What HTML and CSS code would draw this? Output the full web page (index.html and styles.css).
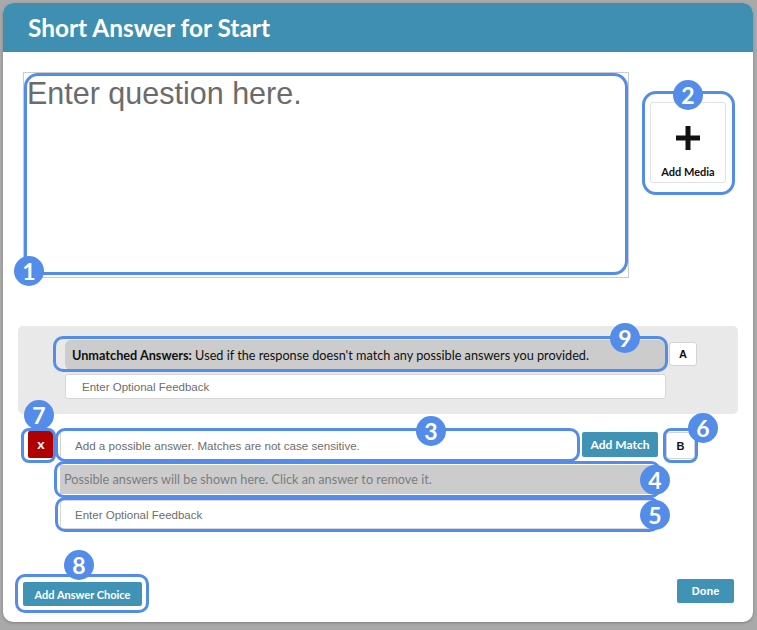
FILE: index.html
```html
<!DOCTYPE html>
<html>
<head>
<meta charset="utf-8">
<link rel="stylesheet" href="styles.css">
</head>
<body>
<div class="modal">
  <div class="header">Short Answer for Start</div>
  <div class="top-row">
    <div class="question">
      <div class="question-text">Enter question here.</div>
      <span class="ann ann-q"></span>
      <span class="badge b1">1</span>
    </div>
    <div class="media-ann">
      <div class="media-box">
        <svg class="plus" width="26" height="26" viewBox="0 0 26 26"><rect x="10.5" y="1" width="5" height="24" fill="#111"/><rect x="1" y="10.5" width="24" height="5" fill="#111"/></svg>
        <span class="media-label">Add Media</span>
      </div>
      <span class="badge b2">2</span>
    </div>
  </div>

  <div class="panel">
    <div class="panel-row">
      <div class="unmatched">
        <b>Unmatched Answers:</b> Used if the response doesn't match any possible answers you provided.
        <span class="ann ann-un"></span>
        <span class="badge b9">9</span>
      </div>
      <div class="letter letter-a">A</div>
    </div>
    <div class="feedback feedback-un">Enter Optional Feedback</div>
  </div>

  <div class="answer-row">
    <div class="xbtn">x
      <span class="ann ann-x"></span>
      <span class="badge b7">7</span>
    </div>
    <div class="answer-input">Add a possible answer. Matches are not case sensitive.
      <span class="ann ann-in"></span>
      <span class="badge b3">3</span>
    </div>
    <div class="btn add-match">Add Match</div>
    <div class="letter letter-b">B
      <span class="ann ann-b"></span>
      <span class="badge b6">6</span>
    </div>
  </div>
  <div class="possible">Possible answers will be shown here. Click an answer to remove it.
    <span class="ann ann-row"></span>
    <span class="badge b4">4</span>
  </div>
  <div class="feedback feedback-ans">Enter Optional Feedback
    <span class="ann ann-row"></span>
    <span class="badge b5">5</span>
  </div>

  <div class="footer">
    <div class="btn add-choice">Add Answer Choice
      <span class="ann ann-choice"></span>
      <span class="badge b8">8</span>
    </div>
    <div class="btn done">Done</div>
  </div>
</div>
</body>
</html>
```

FILE: styles.css
```css
* { box-sizing: border-box; }
html, body { margin: 0; padding: 0; }
body {
  background: #a9a9a9;
  width: 757px;
  height: 630px;
  overflow: hidden;
  padding: 3px 0 0 3px;
  font-family: Lato, "Liberation Sans", sans-serif;
}
.modal {
  width: 750px;
  height: 619px;
  background: #fff;
  border-radius: 10px;
  overflow: hidden;
  display: flex;
  flex-direction: column;
  box-shadow: 0 1px 3px rgba(0,0,0,0.25);
}
.header {
  height: 49px;
  flex: none;
  background: #3e8fb2;
  color: #fff;
  font-weight: 700;
  font-size: 24.4px;
  line-height: 49px;
  padding-left: 25px;
}
.top-row {
  display: flex;
  align-items: flex-start;
  padding-left: 20px;
  margin-top: 20px;
  height: 206px;
  flex: none;
}
.question {
  position: relative;
  width: 606px;
  height: 206px;
  border: 1px solid #cccccc;
}
.question-text {
  font-family: "Liberation Sans", Arial, sans-serif;
  font-size: 30.5px;
  color: #6b6b6b;
  padding: 3px 0 0 3px;
  line-height: 35px;
}
.media-ann {
  position: relative;
  margin-left: 13px;
  margin-top: 19px;
  width: 93px;
  height: 104px;
  border: 3px solid #548cea;
  border-radius: 14px;
  padding: 8px 0 0 5px;
}
.media-box {
  width: 76px;
  height: 81px;
  border: 1px solid #e2e2e2;
  border-radius: 3px;
  display: flex;
  flex-direction: column;
  align-items: center;
  padding-top: 22px;
}
.plus { display: block; }
.media-label {
  margin-top: 14px;
  font-weight: 700;
  font-size: 11px;
  color: #111;
}
.panel {
  margin-top: 48px;
  margin-left: 15px;
  width: 720px;
  height: 88px;
  flex: none;
  background: #e9e9e9;
  border-radius: 5px;
  padding: 14px 0 0 47px;
}
.panel-row {
  display: flex;
  align-items: flex-start;
}
.unmatched {
  position: relative;
  width: 600px;
  height: 30px;
  background: #cccccc;
  border-radius: 6px;
  font-size: 12.7px;
  color: #111;
  line-height: 30px;
  padding-left: 7px;
  white-space: nowrap;
}
.unmatched b { font-weight: 700; }
.letter {
  background: #fff;
  border: 1px solid #d4d4d4;
  border-radius: 3px;
  font-family: "Liberation Sans", Arial, sans-serif;
  font-size: 11px;
  font-weight: 700;
  color: #111;
  display: flex;
  align-items: center;
  justify-content: center;
}
.letter-a {
  margin-left: 4px;
  margin-top: 2px;
  width: 28px;
  height: 24px;
}
.feedback {
  position: relative;
  background: #fff;
  border: 1px solid #d8d8d8;
  border-radius: 3px;
  font-family: "Liberation Sans", Arial, sans-serif;
  font-size: 11.5px;
  color: #6e6e6e;
  padding-left: 16px;
  display: flex;
  align-items: center;
}
.feedback-un {
  margin-top: 4px;
  width: 601px;
  height: 25px;
}
.answer-row {
  display: flex;
  align-items: flex-start;
  margin-top: 16px;
  margin-left: 25px;
  flex: none;
}
.xbtn {
  position: relative;
  width: 26px;
  height: 27px;
  margin-top: 1px;
  background: #b00000;
  color: #fff;
  font-weight: 700;
  font-size: 14px;
  border-radius: 2px;
  display: flex;
  align-items: center;
  justify-content: center;
  padding-bottom: 2px;
}
.answer-input {
  position: relative;
  margin-left: 6px;
  width: 518px;
  height: 30px;
  background: #fff;
  border: 1px solid #d0d0d0;
  border-radius: 3px;
  font-family: "Liberation Sans", Arial, sans-serif;
  font-size: 11.6px;
  color: #6e6e6e;
  padding-left: 14px;
  display: flex;
  align-items: center;
}
.btn {
  background: #4193b5;
  color: #fff;
  font-weight: 700;
  border-radius: 2px;
  display: flex;
  align-items: center;
  justify-content: center;
  position: relative;
  flex: none;
}
.add-match {
  margin-left: 4px;
  margin-top: 2px;
  width: 76px;
  height: 25px;
  font-size: 12px;
}
.letter-b {
  position: relative;
  margin-left: 8px;
  margin-top: 2px;
  width: 29px;
  height: 27px;
}
.possible {
  position: relative;
  margin-top: 5px;
  margin-left: 57px;
  width: 596px;
  height: 29px;
  flex: none;
  background: #cccccc;
  font-size: 12.7px;
  color: #7c7c7c;
  line-height: 29px;
  padding-left: 4px;
}
.feedback-ans {
  margin-top: 6px;
  margin-left: 57px;
  width: 596px;
  height: 29px;
  flex: none;
  padding-left: 14px;
}
.footer {
  margin-top: auto;
  display: flex;
  justify-content: space-between;
  align-items: flex-end;
  padding: 0 19px 16px 20px;
}
.add-choice {
  width: 119px;
  height: 24px;
  font-size: 11px;
}
.done {
  width: 57px;
  height: 24px;
  font-size: 11px;
  margin-bottom: 3px;
  font-family: "Liberation Sans", Arial, sans-serif;
}

/* annotation overlays */
.ann {
  position: absolute;
  border: 3px solid #548cea;
  border-radius: 10px;
  pointer-events: none;
}
.ann-q { left: 0; right: 0; top: 0; bottom: 2px; border-radius: 14px; }
.ann-un { left: -12px; right: -3px; top: -4px; bottom: -2px; }
.ann-x { left: -7px; right: -2px; top: -3px; bottom: -5px; border-radius: 8px; }
.ann-in { left: -6px; right: -3px; top: -3px; bottom: -3px; }
.ann-b { left: -4px; right: -4px; top: -5px; bottom: -5px; border-radius: 8px; }
.ann-row { left: -6px; right: -5px; top: -4px; bottom: -4px; }
.ann-choice { left: -8px; right: -7px; top: -8px; bottom: -7px; }

.badge {
  position: absolute;
  width: 30px;
  height: 30px;
  border-radius: 50%;
  background: #548cea;
  color: #fff;
  font-family: Lato, sans-serif;
  font-weight: 700;
  font-size: 23px;
  line-height: 30px;
  text-align: center;
}
.b1 { left: -10px; top: 183px; }
.b2 { left: 28px; top: -14px; }
.b9 { left: 545px; top: -17px; }
.b7 { left: -4px; top: -31px; }
.b3 { left: 355px; top: -15px; }
.b6 { left: 21px; top: -20px; }
.b4 { left: 580px; top: 0; }
.b5 { left: 579px; top: -1px; }
.b8 { left: 41px; top: -32px; }
```
